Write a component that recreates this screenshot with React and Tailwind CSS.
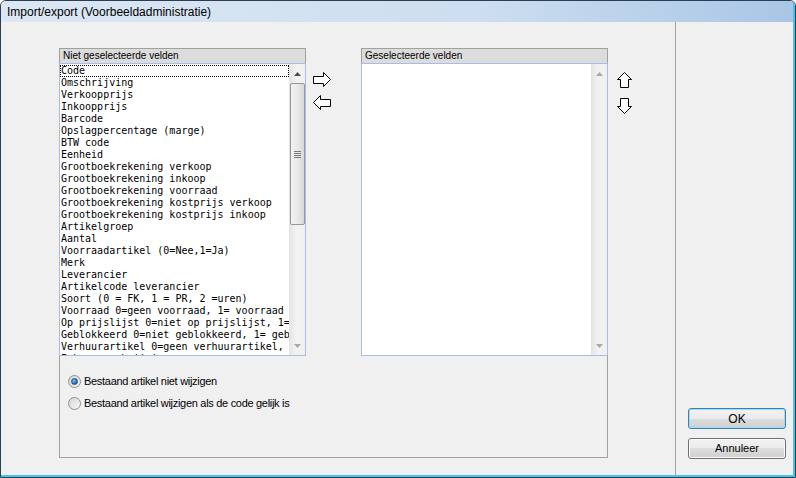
import React from "react";

// Dialoog "Import/export": velden kiezen tussen twee lijsten.
const velden = [
  "Code",
  "Omschrijving",
  "Verkoopprijs",
  "Inkoopprijs",
  "Barcode",
  "Opslagpercentage (marge)",
  "BTW code",
  "Eenheid",
  "Grootboekrekening verkoop",
  "Grootboekrekening inkoop",
  "Grootboekrekening voorraad",
  "Grootboekrekening kostprijs verkoop",
  "Grootboekrekening kostprijs inkoop",
  "Artikelgroep",
  "Aantal",
  "Voorraadartikel (0=Nee,1=Ja)",
  "Merk",
  "Leverancier",
  "Artikelcode leverancier",
  "Soort (0 = FK, 1 = PR, 2 =uren)",
  "Voorraad 0=geen voorraad, 1= voorraad",
  "Op prijslijst 0=niet op prijslijst, 1= op prijslijst",
  "Geblokkeerd 0=niet geblokkeerd, 1= geblokkeerd",
  "Verhuurartikel 0=geen verhuurartikel, 1= verhuurartikel",
  "Inkoopomschrijving",
];

function Pijl({ richting }) {
  const paden = {
    rechts: "M0.5 4.5 H10.5 V0.5 L17.5 7.5 L10.5 14.5 V11.5 H0.5 Z",
    links: "M17.5 4.5 H7.5 V0.5 L0.5 7.5 L7.5 14.5 V11.5 H17.5 Z",
    omhoog: "M7.5 0.5 L14.5 7.5 H11.5 V15.5 H3.5 V7.5 H0.5 Z",
    omlaag: "M7.5 15.5 L14.5 8.5 H11.5 V0.5 H3.5 V8.5 H0.5 Z",
  };
  const horizontaal = richting === "rechts" || richting === "links";
  return (
    <svg
      width={horizontaal ? 18 : 15}
      height={horizontaal ? 15 : 16}
      className="block"
    >
      <path d={paden[richting]} fill="#ffffff" stroke="#000000" strokeWidth="1" />
    </svg>
  );
}

function ScrollDriehoek({ omlaag, licht }) {
  return (
    <svg width="7" height="4" className="block">
      <path
        d={omlaag ? "M0 0 H7 L3.5 4 Z" : "M0 4 H7 L3.5 0 Z"}
        fill={licht ? "#a8a8a8" : "#4d4d4d"}
      />
    </svg>
  );
}

function Scrollbalk({ metDuim }) {
  return (
    <div className="w-[16px] h-full flex flex-col items-center bg-[linear-gradient(to_right,#e6e6e6,#f2f2f2_40%,#f0f0f0)] border-l border-[#e3e3e3]">
      <div className="h-[17px] flex items-center justify-center pt-[2px]">
        <ScrollDriehoek licht={!metDuim} />
      </div>
      {metDuim ? (
        <div className="w-[15px] h-[142px] mt-[2px] rounded-[2px] border border-[#979797] bg-[linear-gradient(to_right,#f3f3f3,#e9e9e9_50%,#d8d8d8)] flex flex-col items-center justify-center gap-[1px]">
          <div className="w-[7px] h-px bg-[#7a7a7a]" />
          <div className="w-[7px] h-px bg-[#7a7a7a]" />
          <div className="w-[7px] h-px bg-[#7a7a7a]" />
          <div className="w-[7px] h-px bg-[#7a7a7a]" />
        </div>
      ) : null}
      <div className="flex-1" />
      <div className="h-[17px] flex items-center justify-center pb-[2px]">
        <ScrollDriehoek omlaag licht />
      </div>
    </div>
  );
}

function Lijst({ titel, items }) {
  return (
    <div className="w-[247px] flex flex-col">
      <div className="h-[15px] border border-b-0 border-[#a0a0a0] bg-[#dcdcdc] pl-[3px] text-[10px] leading-[14px] text-black font-['Liberation_Sans',Arial,sans-serif]">
        {titel}
      </div>
      <div className="h-[293px] border border-[#a7bde3] bg-white flex overflow-hidden">
        <div className="flex-1 overflow-hidden pt-[1px] font-['DejaVu_Sans_Mono','Liberation_Mono',monospace] text-[10px] leading-[12px] text-black">
          {items.map((v, i) => (
            <div
              key={v}
              className={`h-[12px] pl-[1px] whitespace-nowrap overflow-hidden ${
                i === 0 ? "outline outline-1 outline-dotted outline-black -outline-offset-1" : ""
              }`}
            >
              {v}
            </div>
          ))}
        </div>
        <Scrollbalk metDuim={items.length > 0} />
      </div>
    </div>
  );
}

function Radio({ aan, label }) {
  return (
    <div className="flex items-center h-[13px]">
      <div className="w-[13px] h-[13px] rounded-full border border-[#8e8f8f] bg-[linear-gradient(135deg,#d6d6d6,#f8f8f8)] flex items-center justify-center">
        {aan ? (
          <div className="w-[7px] h-[7px] rounded-full bg-[radial-gradient(circle_at_35%_35%,#7fc3f5,#1a64b8_70%)] border border-[#1a4f8c]" />
        ) : null}
      </div>
      <span className="ml-[3px] text-[11px] tracking-[-0.3px] text-black font-['Liberation_Sans',Arial,sans-serif]">
        {label}
      </span>
    </div>
  );
}

export default function App() {
  return (
    <div className="w-[796px] h-[478px] rounded-t-[6px] border border-[#2c3e52] overflow-hidden bg-[#f0f0f0]">
      <div className="w-full h-full flex flex-col border-r-2 border-b-2 border-[#3fc6ee]">
        {/* Titelbalk */}
        <div className="h-[21px] flex items-center pl-[6px] bg-[linear-gradient(to_right,#dce7f3,#cddef0_60%,#a9c6e6)] text-[12px] text-black font-['Liberation_Sans',Arial,sans-serif]">
          Import/export (Voorbeeldadministratie)
        </div>

        <div className="flex flex-1">
          {/* Linkerdeel met lijsten */}
          <div className="w-[674px] pl-[58px] pt-[26px]">
            <div className="flex">
              <Lijst titel="Niet geselecteerde velden" items={velden} />
              <div className="w-[55px] pl-[7px] pt-[24px] flex flex-col gap-[8px]">
                <Pijl richting="rechts" />
                <Pijl richting="links" />
              </div>
              <Lijst titel="Geselecteerde velden" items={[]} />
              <div className="pl-[9px] pt-[24px] flex flex-col gap-[10px]">
                <Pijl richting="omhoog" />
                <Pijl richting="omlaag" />
              </div>
            </div>
            <div className="w-[549px] h-[102px] border border-t-0 border-[#a0a0a0] pl-[8px] pt-[19px] flex flex-col gap-[9px]">
              <Radio aan label="Bestaand artikel niet wijzigen" />
              <Radio label="Bestaand artikel wijzigen als de code gelijk is" />
            </div>
          </div>

          <div className="w-px bg-[#a0a0a0]" />

          {/* Knoppen */}
          <div className="flex-1 flex flex-col justify-end pl-[12px] pb-[16px] gap-[9px]">
            <button className="w-[98px] h-[21px] rounded-[3px] border border-[#3c7fb1] shadow-[inset_0_0_0_1px_#9fdcf7] bg-[linear-gradient(to_bottom,#f2f2f2,#ebebeb_50%,#dddddd_50%,#cfcfcf)] text-[12px] text-black font-['Liberation_Sans',Arial,sans-serif]">
              OK
            </button>
            <button className="w-[98px] h-[21px] rounded-[3px] border border-[#707070] shadow-[inset_0_0_0_1px_#fbfbfb] bg-[linear-gradient(to_bottom,#f2f2f2,#ebebeb_50%,#dddddd_50%,#cfcfcf)] text-[11px] text-black font-['Liberation_Sans',Arial,sans-serif]">
              Annuleer
            </button>
          </div>
        </div>
      </div>
    </div>
  );
}
